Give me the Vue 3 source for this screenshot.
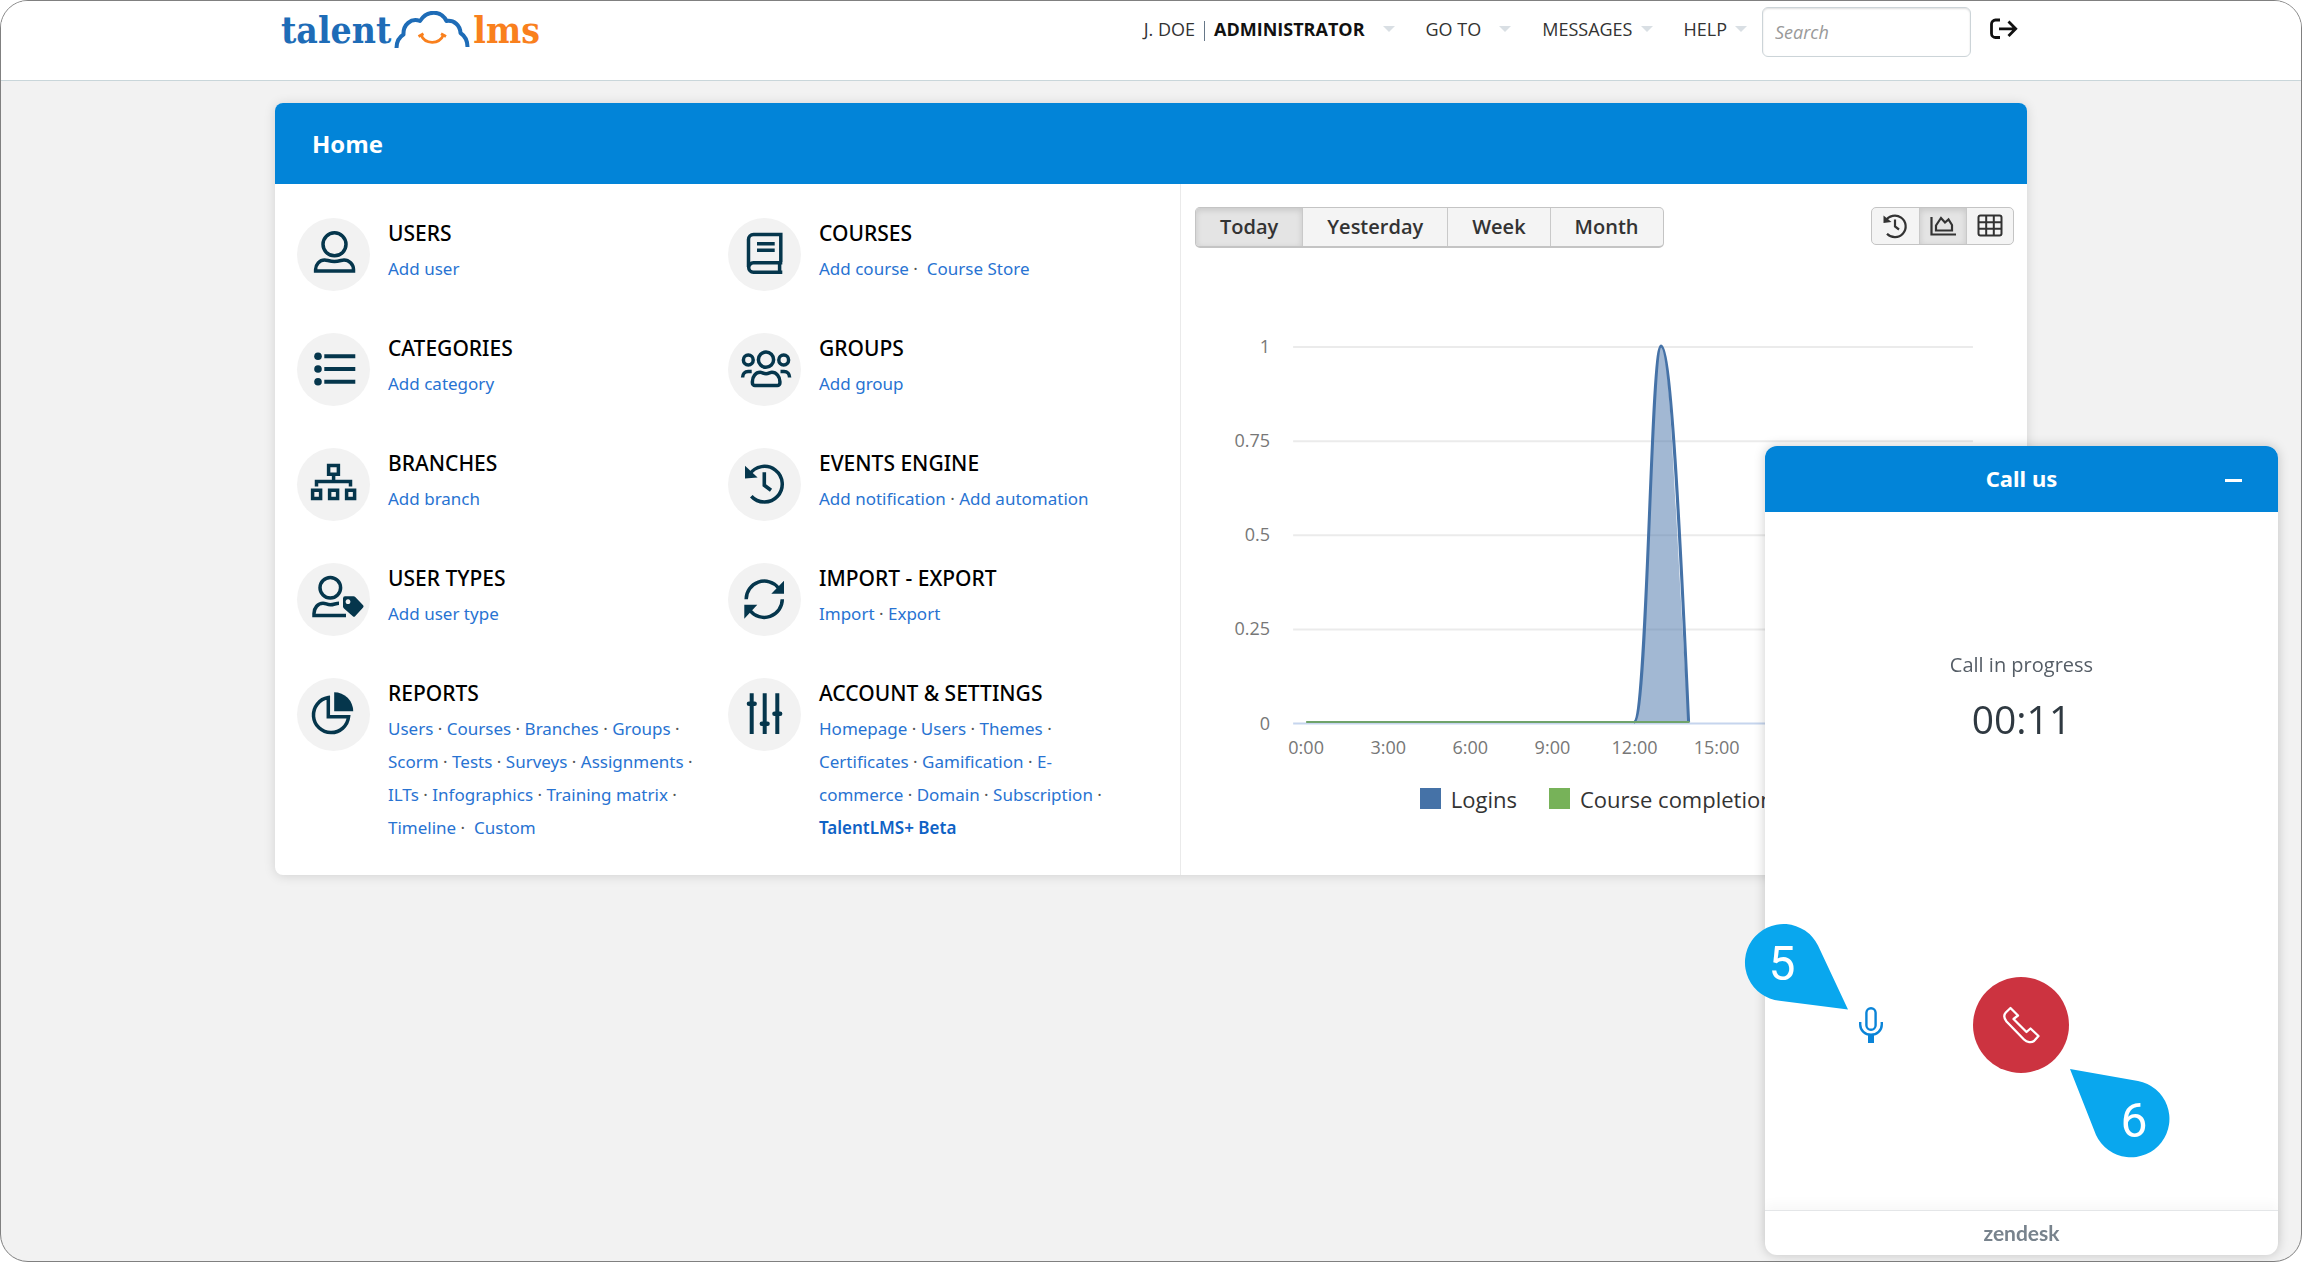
<script setup>
import { ref } from 'vue'

const ranges = ['Today', 'Yesterday', 'Week', 'Month']
const range = ref('Today')
const search = ref('')

const sections = [
  {
    title: 'USERS',
    links: ['Add user'],
    icon: '<circle cx="37.5" cy="26.3" r="11.5"/><path d="M18.6 53v-1.5c0-5 4-9.6 9-9.6 2.600 0 5 1.500 9.800 1.500s7.200-1.500 9.600-1.500c5 0 9.500 4.600 9.500 9.600V53z"/>'
  },
  {
    title: 'COURSES',
    links: ['Add course', 'Course Store'],
    icon: '<path d="M52.800 44V16.600H25.500a5 5 0 0 0-5 5V49M54.300 44.800H25.400a4.700 4.700 0 0 0 0 9.400h28.900M51.600 45v9M29 25.700h17.700M29 32.300h17.700"/>'
  },
  {
    title: 'CATEGORIES',
    links: ['Add category'],
    icon: '<g fill="currentColor" stroke="none"><circle cx="21" cy="23.300" r="3.800"/><circle cx="21" cy="36" r="3.800"/><circle cx="21" cy="48.700" r="3.800"/></g><path stroke-width="4" d="M27.300 23.300h31M27.300 36h31M27.300 48.700h31"/>'
  },
  {
    title: 'GROUPS',
    links: ['Add group'],
    icon: '<circle cx="38" cy="26.700" r="7.600"/><circle cx="20.300" cy="27" r="4.900"/><circle cx="55.700" cy="27" r="4.900"/><path d="M27 52.500h22.400a2.500 2.500 0 0 0 2.500-2.500v-1.500c0-5-3.500-9.200-8-9.200-2 0-3 1.400-5.800 1.400s-4-1.400-6-1.400c-4.500 0-7.700 4.200-7.700 9.200V50a2.500 2.500 0 0 0 2.600 2.500zM14.600 44.500c0-3.600 2.200-6 5.600-6h3.500M61.600 44.500c0-3.600-2.200-6-5.600-6h-3.500"/>'
  },
  {
    title: 'BRANCHES',
    links: ['Add branch'],
    icon: '<path d="M31.600 17.600h9.800v8.700h-9.800zM15.600 42.200h8v8.300h-8zM32.600 42.200h8v8.300h-8zM49.600 42.200h8v8.300h-8zM36.600 27v7M19.500 38.500v-5h34v5"/>'
  },
  {
    title: 'EVENTS ENGINE',
    links: ['Add notification', 'Add automation'],
    icon: '<path d="M21.500 26.500A17.800 17.800 0 1 1 23.300 48.200"/><path stroke-width="3.600" d="M36.300 24.300v13l6.700 5"/><path fill="currentColor" stroke="none" d="M17 17.700l12.600 11.800L17 30.500z"/>'
  },
  {
    title: 'USER TYPES',
    links: ['Add user type'],
    icon: '<circle cx="33.300" cy="24.700" r="10.300"/><path d="M49 52.500H17v-2c0-5.600 4-10.300 9-10.300 2.800 0 4 1.600 7.300 1.600s5.700-1.600 8.700-1.600"/><path fill="currentColor" stroke="none" fill-rule="evenodd" d="M48 33.300h8.500q1 0 2 1l7.600 8q1 1 0 2.200l-8 8.700q-1.100 1.200-2.300 0l-8.800-7.600q-1-1-1-2v-8q0-2.300 2-2.300zM51 36.300a2.400 2.400 0 1 0 .01 0z"/>'
  },
  {
    title: 'IMPORT - EXPORT',
    links: ['Import', 'Export'],
    icon: '<path d="M18.200 36.300A18.100 18.100 0 0 1 50.500 25M54.300 36.300A18.100 18.100 0 0 1 22 47.500"/><path fill="currentColor" stroke="none" d="M56 17.700v13H43.300zM16.300 55.700v-14h13z"/>'
  },
  {
    title: 'REPORTS',
    links: ['Users', 'Courses', 'Branches', 'Groups', 'Scorm', 'Tests', 'Surveys', 'Assignments', 'ILTs', 'Infographics', 'Training matrix', 'Timeline', 'Custom'],
    icon: '<path d="M31.300 19.600v19.100h20.300A17.600 17.600 0 1 1 31.300 19.600z"/><path fill="currentColor" stroke="none" d="M37.200 14.200a19 19 0 0 1 19 19h-19z"/>'
  },
  {
    title: 'ACCOUNT & SETTINGS',
    links: ['Homepage', 'Users', 'Themes', 'Certificates', 'Gamification', 'E-commerce', 'Domain', 'Subscription', 'TalentLMS+ Beta'],
    icon: '<path stroke-width="4" d="M23.700 15.300V56M36.700 15.300V56M49.300 15.300V56"/><path stroke-width="4.600" stroke-linecap="round" d="M21 25.700h5.600M33.900 45.700h5.600M46.500 35.700h5.600"/>'
  }
]

// Separator that follows a link; a few entries carry an extra space.
const separator = (label) => (label === 'Add course' || label === 'Timeline' ? '\u00a0·\u00a0 ' : '\u00a0· ')

const yTicks = [
  { label: '1', y: 77 },
  { label: '0.75', y: 171 },
  { label: '0.5', y: 265 },
  { label: '0.25', y: 359 },
  { label: '0', y: 453 }
]
const hours = ['0:00', '3:00', '6:00', '9:00', '12:00', '15:00', '18:00', '21:00']
</script>

<template>
  <div class="frame">
    <header class="topbar">
      <div class="container topbar-inner">
        <a class="logo" href="#" aria-label="talentlms">
          <span>talent</span>
          <svg width="76" height="38" viewBox="0 0 76 38" fill="none">
            <path d="M2.500 37C2.500 31 4.500 26.500 9.500 23.500C9 14 17 6.500 26 10C33-1 47-1 52.500 10C60 9 66 14 66.500 22C71 25 73.500 30 73.500 36" stroke="#1e6cb7" stroke-width="4" stroke-linejoin="round" />
            <path d="M27 24C31 33.500 45 34 49.500 24M24.500 25.500l5-2.800M52 25.500l-5-2.800" stroke="#f9801d" stroke-width="2.800" />
          </svg>
          <span class="accent">lms</span>
        </a>
        <nav class="menu">
          <button class="wide" type="button"><span>J. DOE<i></i><b>ADMINISTRATOR</b></span></button>
          <button class="wide" type="button">GO TO</button>
          <button type="button">MESSAGES</button>
          <button type="button">HELP</button>
        </nav>
        <input v-model="search" class="search" type="text" placeholder="Search" aria-label="Search" />
        <a class="logout" href="#" aria-label="Log out">
          <svg width="28" height="22" viewBox="0 0 28 22" fill="none" stroke="#111" stroke-width="2.800">
            <path d="M10 2H5.500a4 4 0 0 0-4 4v9.500a4 4 0 0 0 4 4H10M9 10.800h16M18.500 3.500l7.200 7.300-7.200 7.300" />
          </svg>
        </a>
      </div>
    </header>

    <main class="container card">
      <h1>Home</h1>
      <div class="panels">
        <div class="sections">
          <section v-for="s in sections" :key="s.title" class="tile">
            <svg class="tile-icon" viewBox="0 0 73 73" fill="none" stroke="currentColor" stroke-width="3.5" v-html="s.icon"></svg>
            <div class="tile-text">
              <h2>{{ s.title }}</h2>
              <p>
                <template v-for="(l, i) in s.links" :key="l"><a href="#" :class="{ strong: l === 'TalentLMS+ Beta' }">{{ l }}</a><template v-if="i < s.links.length - 1">{{ separator(l) }}</template></template>
              </p>
            </div>
          </section>
        </div>

        <section class="stats" aria-label="Activity">
          <div class="toolbar">
            <div class="group">
              <button v-for="r in ranges" :key="r" type="button" :class="{ active: r === range }" @click="range = r">{{ r }}</button>
            </div>
            <div class="group icons">
              <button type="button" aria-label="Timeline">
                <svg width="28" height="28" viewBox="0 0 28 28" fill="none" stroke="currentColor" stroke-width="2.200">
                  <path d="M4.500 9A10.800 10.800 0 1 1 6 21.800M14 7.500V14.500l4 3" /><path d="M2.500 3.500l8 6.500-8 1z" fill="currentColor" stroke="none" />
                </svg>
              </button>
              <button class="active" type="button" aria-label="Chart">
                <svg width="28" height="28" viewBox="0 0 28 28" fill="none" stroke="currentColor" stroke-width="2.200">
                  <path d="M2.500 5v17.500H27M7 18.500v-5l5-7.500 4 4.500 3.500-3 3.500 5.500v5.500z" />
                </svg>
              </button>
              <button type="button" aria-label="Table">
                <svg width="28" height="28" viewBox="0 0 28 28" fill="none" stroke="currentColor" stroke-width="2">
                  <rect x="2.500" y="3.500" width="23" height="20" rx="2" /><path d="M2.500 10.200h23M2.500 16.800h23M10.200 3.500v20M17.800 3.500v20" />
                </svg>
              </button>
            </div>
          </div>
          <svg class="chart" viewBox="0 0 845 500">
            <g v-for="t in yTicks" :key="t.label">
              <line x1="112" x2="791" :y1="t.y" :y2="t.y" :stroke="t.y === 453 ? '#c6d5ee' : '#ebebeb'" stroke-width="2" />
              <text x="89" :y="t.y + 6" text-anchor="end">{{ t.label }}</text>
            </g>
            <path d="M125 451.500H452.500C466 451.500 469 76 479.500 76C489 76 493 250 507 451.500z" fill="#4572a7" fill-opacity=".5" />
            <path d="M452.500 451.500C466 451.500 469 76 479.500 76C489 76 498 250 507 451.500" fill="none" stroke="#4572a7" stroke-width="3" />
            <path d="M125 451.500H508" stroke="#6fa36a" stroke-width="2" />
            <text v-for="(h, i) in hours" :key="h" :x="125 + i * 82" y="483" text-anchor="middle">{{ h }}</text>
          </svg>
          <ul class="legend">
            <li><i class="blue"></i>Logins</li>
            <li><i class="green"></i>Course completions</li>
          </ul>
        </section>
      </div>
    </main>

    <aside class="call" aria-label="Call us">
      <header>
        <h2>Call us</h2>
        <button type="button" aria-label="Minimize"></button>
      </header>
      <div class="call-body">
        <p>Call in progress</p>
        <strong>00:11</strong>
        <div class="controls">
          <button class="mic" type="button" aria-label="Mute">
            <svg width="24" height="36" viewBox="0 0 24 36" fill="none" stroke="#0a84d8" stroke-width="2.400">
              <rect x="7.400" y="1.200" width="9.200" height="21.600" rx="4.600" /><path d="M1.200 15v2.500C1.200 23.500 6 27.800 12 27.800s10.800-4.300 10.800-10.300V15" /><path d="M12 28v8" stroke-width="6" />
            </svg>
          </button>
          <button class="hangup" type="button" aria-label="End call">
            <svg width="38" height="38" viewBox="0 0 38 38" fill="none" stroke="#fff" stroke-width="2.300" stroke-linejoin="round">
              <path d="M8.500 2L3.800 6.500C1.500 9 2.200 12.500 4.500 15.500L22 33.500C25 36.500 29.500 37 32 35L36.500 30L28.500 22.500L24.500 26L11.500 13L16 9.500z" />
            </svg>
          </button>
        </div>
      </div>
      <footer>zendesk</footer>

      <svg class="pin pin-five" width="103" height="86" viewBox="0 0 103 86">
        <path d="M73 21.500L103 85.500L34.500 76.800A38.500 38.500 0 1 1 73 21.500z" fill="#09a7ee" />
        <text x="37" y="56" text-anchor="middle">5</text>
      </svg>
      <svg class="pin pin-six" width="100" height="89" viewBox="0 0 100 89">
        <path d="M0 0L68 12A38.500 38.500 0 1 1 26 66z" fill="#09a7ee" />
        <text x="64" y="68" text-anchor="middle">6</text>
      </svg>
    </aside>
  </div>
</template>

<style>
body {
  margin: 0;
  background: #fff;
}
</style>

<style scoped>
.frame {
  box-sizing: border-box;
  min-height: 100vh;
  border: 1px solid #808080;
  border-radius: 28px;
  background: #f2f2f2;
  overflow: hidden;
  font-family: "Open Sans", "Noto Sans", sans-serif;
  color: #333;
}
button {
  border: 0;
  padding: 0;
  background: none;
  font: inherit;
  color: inherit;
}
h1, h2, p, ul {
  margin: 0;
  padding: 0;
}
.container {
  box-sizing: border-box;
  width: calc(100% - 48px);
  max-width: 1752px;
  margin: 0 auto;
}
.topbar {
  height: 79px;
  border-bottom: 1px solid #c9d6da;
  background: #fff;
}
.topbar-inner {
  display: flex;
  align-items: flex-start;
  padding: 6px 9px 0 6px;
}
.logo {
  display: flex;
  margin-right: auto;
  margin-top: 4px;
  color: #1e6cb7;
  font: bold 37px/38px "DejaVu Serif Condensed", "DejaVu Serif", serif;
  text-decoration: none;
}
.logo svg {
  margin: 0 3px;
}
.logo .accent {
  color: #f9801d;
}
.menu {
  display: flex;
  gap: 31px;
  margin-right: 15px;
  font-size: 18px;
  line-height: 44px;
}
.menu button {
  display: flex;
  align-items: center;
  gap: 8px;
  white-space: nowrap;
}
.menu .wide {
  gap: 18px;
}
.menu b {
  color: #111;
  font-weight: 700;
}
.menu i {
  display: inline-block;
  width: 1px;
  height: 20px;
  margin: 0 9px;
  background: #678;
  vertical-align: middle;
}
.menu button::after {
  content: "";
  border: 6px solid transparent;
  border-top-color: #d9dfe4;
  border-bottom: 0;
}
.search {
  box-sizing: border-box;
  width: 209px;
  height: 50px;
  padding: 0 12px;
  border: 1px solid #ccd4d8;
  border-radius: 6px;
  box-shadow: inset 0 1px 2px #0002;
  font: italic 18px "Open Sans", sans-serif;
}
.search::placeholder {
  color: #999;
}
.logout {
  margin: 11px 0 0 19px;
}
.logout svg {
  display: block;
}
.card {
  margin-top: 22px;
  border-radius: 8px;
  background: #fff;
  box-shadow: 0 1px 12px #0002;
  overflow: hidden;
}
h1 {
  padding-left: 37px;
  background: #0284d8;
  color: #fff;
  font-size: 24px;
  line-height: 81px;
}
.panels {
  display: flex;
}
.sections {
  box-sizing: border-box;
  display: grid;
  grid-template-columns: 431px 1fr;
  grid-auto-rows: minmax(115px, auto);
  width: 906px;
  padding: 34px 0 31px 22px;
  border-right: 1px solid #eaeaea;
}
.tile {
  display: flex;
  align-items: flex-start;
  gap: 18px;
}
.tile-icon {
  flex: none;
  width: 73px;
  height: 73px;
  border-radius: 50%;
  background: #f2f2f2;
  color: #05364c;
}
.tile-text {
  width: 316px;
}
h2 {
  color: #000;
  font-family: "Noto Sans", "Open Sans", sans-serif;
  font-size: 21px;
  font-weight: 500;
  line-height: 31px;
}
.tile p {
  margin-top: 3px;
  font-family: "Noto Sans", "Open Sans", sans-serif;
  font-size: 17px;
  line-height: 33px;
  color: #555;
}
.tile a {
  color: #2873d2;
  text-decoration: none;
}
.tile a.strong {
  font-weight: 600;
  color: #0f62c5;
}
.stats {
  flex: 1;
  min-width: 0;
}
.toolbar {
  display: flex;
  justify-content: space-between;
  align-items: flex-start;
  padding: 23px 13px 0 14px;
}
.group {
  display: flex;
  border: 1px solid #c4c4c4;
  border-bottom-width: 2px;
  border-radius: 5px;
  background: #f4f4f4;
  font-size: 20px;
  font-weight: 600;
  line-height: 38px;
  overflow: hidden;
}
.group button {
  padding: 0 24px;
}
.group button + button {
  border-left: 1px solid #c9c9c9;
}
.group .active {
  background: #e4e4e4;
  box-shadow: inset 0 2px 6px #0002;
}
.icons {
  border-bottom-width: 1px;
}
.icons button {
  display: flex;
  align-items: center;
  width: 47px;
  height: 36px;
  padding: 0 9px;
}
.chart {
  display: block;
  width: 100%;
  margin-top: 22px;
}
.chart text {
  fill: #777;
  font-size: 18px;
}
.legend {
  display: flex;
  justify-content: center;
  gap: 32px;
  padding-right: 4px;
  list-style: none;
  font-size: 22px;
  line-height: 30px;
  margin-top: 13px;
}
.legend li {
  display: flex;
  align-items: center;
  gap: 10px;
}
.legend i {
  width: 21px;
  height: 21px;
}
.blue {
  background: #4572a7;
}
.green {
  background: #77b259;
}
.call {
  position: fixed;
  right: 24px;
  bottom: 7px;
  display: flex;
  flex-direction: column;
  width: 513px;
  height: 809px;
  border-radius: 12px;
  background: #fff;
  box-shadow: 0 0 12px #0003;
}
.call header {
  position: relative;
  border-radius: 12px 12px 0 0;
  background: #0284d8;
  text-align: center;
}
.call h2 {
  color: #fff;
  font-size: 22px;
  font-weight: 700;
  line-height: 64px;
  padding-bottom: 2px;
}
.call header button {
  position: absolute;
  right: 36px;
  top: 33px;
  width: 17px;
  height: 3px;
  background: #fff;
}
.call-body {
  display: flex;
  flex: 1;
  flex-direction: column;
  align-items: center;
  padding-top: 138px;
}
.call p {
  font-size: 20px;
  line-height: 30px;
  color: #555d66;
}
.call strong {
  margin-top: 14px;
  font-size: 39px;
  font-weight: 400;
  line-height: 50px;
  color: #2f3941;
}
.controls {
  box-sizing: border-box;
  display: grid;
  grid-template-columns: 1fr 1fr 1fr;
  place-items: center;
  width: 100%;
  margin-top: 233px;
  padding: 0 31px;
}
.controls svg {
  display: block;
}
.hangup {
  display: grid;
  place-items: center;
  width: 96px;
  height: 96px;
  border-radius: 50%;
  background: #cc3340;
}
.call footer {
  border-top: 1px solid #e4e6e8;
  box-shadow: 0 -6px 12px #00000008;
  border-radius: 0 0 12px 12px;
  color: #78838d;
  font: bold 21px/44px Lato, sans-serif;
  text-align: center;
}
.pin {
  position: absolute;
  overflow: visible;
}
.pin text {
  fill: #fff;
  font: 48px Roboto, sans-serif;
}
.pin-five {
  left: -20px;
  top: 478px;
}
.pin-six {
  left: 305px;
  top: 623px;
}
</style>
